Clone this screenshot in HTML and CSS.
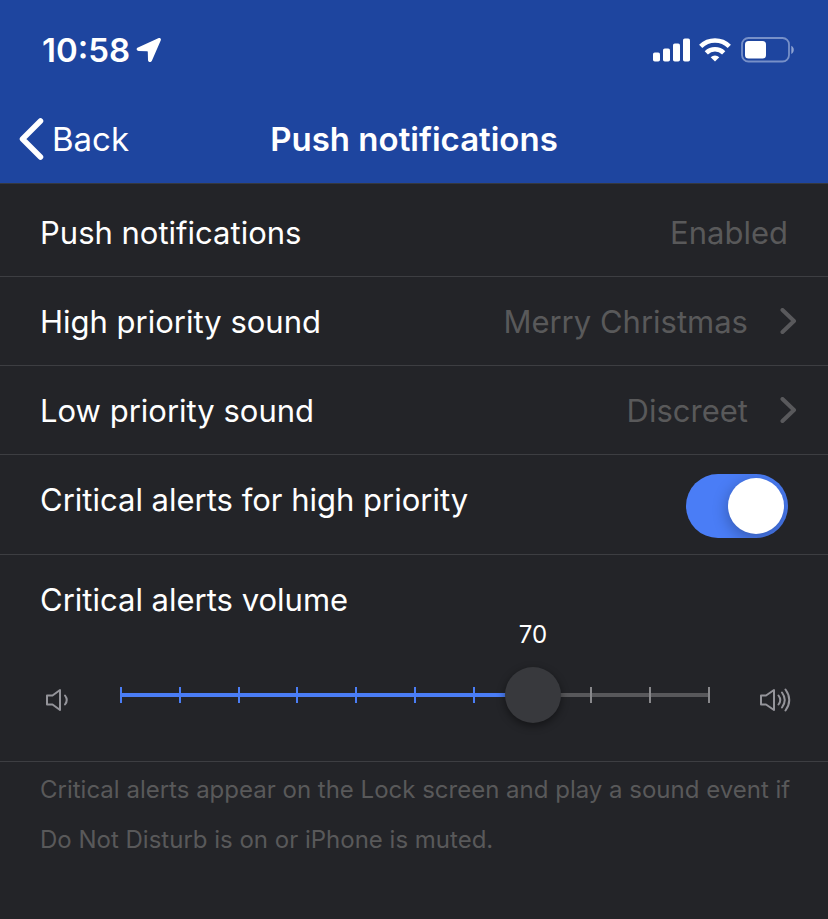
FILE: index.html
```html
<!DOCTYPE html>
<html lang="en">
<head>
<meta charset="utf-8">
<meta name="viewport" content="width=device-width, initial-scale=1">
<title>Push notifications</title>
<link rel="stylesheet" href="styles.css">
</head>
<body>
<header class="header">
  <div class="status">
    <div class="status-time">
      <span>10:58</span>
      <svg class="location" width="26" height="26" viewBox="0 0 26 26" aria-hidden="true"><path d="M2 10.600 22.200 1.200c1.900-.9 3.300.5 2.500 2.400l-8.800 20.200c-.9 2-3.800 1.700-3.900-.8l-.2-8c0-.6-.2-.8-.8-.8l-8.300-.2c-2.400-.1-2.800-2.400-.7-3.400z" fill="#fff"/></svg>
    </div>
    <div class="status-icons">
      <svg width="38" height="24" viewBox="0 0 38 24" aria-hidden="true"><g fill="#fff"><rect x="0" y="14.500" width="7" height="9" rx="1.800"/><rect x="10" y="10.500" width="7" height="13" rx="1.800"/><rect x="20" y="5.500" width="7" height="18" rx="1.800"/><rect x="30" y="0.500" width="7" height="23" rx="1.800"/></g></svg>
      <svg width="32" height="24" viewBox="0 0 32 24" aria-hidden="true"><path d="M16 23.500 11.700 19.200a6.200 6.200 0 0 1 8.600 0z" fill="#fff"/><g fill="none" stroke="#fff" stroke-width="4.600"><path d="M7.300 14.800a12.500 12.500 0 0 1 17.400 0"/><path d="M1.700 8.300a20.500 20.500 0 0 1 28.600 0"/></g></svg>
      <svg class="battery" width="54" height="26" viewBox="0 0 54 26" aria-hidden="true"><rect x="1" y="1" width="47" height="23.500" rx="6.500" fill="none" stroke="#7790c8" stroke-width="1.800"/><rect x="4" y="4" width="21" height="17.500" rx="3.500" fill="#fff"/><path d="M50.300 8.700c3.300 1.500 3.300 6.700 0 8.200z" fill="#8ea3d2"/></svg>
    </div>
  </div>
  <nav class="nav">
    <a class="back" href="#"><svg width="25" height="42" viewBox="0 0 25 42" aria-hidden="true"><path d="M21.500 3 3.500 21l18 18" fill="none" stroke="#fff" stroke-width="5.500" stroke-linecap="round" stroke-linejoin="round"/></svg><span>Back</span></a>
    <h1 class="title">Push notifications</h1>
  </nav>
</header>
<main>
  <div class="list">
    <div class="row"><span>Push notifications</span><span class="value">Enabled</span></div>
    <a class="row" href="#"><span>High priority sound</span><span class="value">Merry Christmas</span><svg class="chevron" width="18" height="28" viewBox="0 0 18 28" aria-hidden="true"><path d="M2.500 2 14 13 2.500 24"/></svg></a>
    <a class="row" href="#"><span>Low priority sound</span><span class="value">Discreet</span><svg class="chevron" width="18" height="28" viewBox="0 0 18 28" aria-hidden="true"><path d="M2.500 2 14 13 2.500 24"/></svg></a>
    <div class="row row-toggle"><label for="critical">Critical alerts for high priority</label><input class="toggle" id="critical" type="checkbox" role="switch" checked></div>
    <div class="volume">
      <label for="volume">Critical alerts volume</label>
      <div class="volume-control">
        <svg class="speaker" width="32" height="26" viewBox="0 0 32 26" aria-hidden="true"><path d="M3 8.500h5.500L16 3v20l-7.500-5.500H3z"/><path d="M21 8.500q3.500 4.500 0 9"/></svg>
        <div class="slider">
          <div class="track"></div>
          <div class="ticks"><i></i><i></i><i></i><i></i><i></i><i></i><i></i><i></i><i></i><i></i><i></i></div>
          <input class="range" id="volume" type="range" min="0" max="100" step="10" value="70">
          <output class="bubble" for="volume">70</output>
        </div>
        <svg class="speaker" width="32" height="26" viewBox="0 0 32 26" aria-hidden="true"><path d="M1 8.500h5L14 3v20l-8-5.500H1z"/><path d="M18.500 8.500q3.500 4.500 0 9M22 5.500q5.500 7.500 0 15M25.500 2.500q7.500 10.500 0 21"/></svg>
      </div>
    </div>
  </div>
  <p class="note">Critical alerts appear on the Lock screen and play a sound event if Do Not Disturb is on or iPhone is muted.</p>
</main>
</body>
</html>
```
FILE: styles.css
```css
* {
  box-sizing: border-box;
}

body {
  margin: 0;
  min-height: 100vh;
  background: #232428;
  color: #fff;
  font-family: Inter, "Liberation Sans", sans-serif;
  font-size: 31px;
  line-height: 40px;
}

a {
  color: inherit;
  text-decoration: none;
}

svg {
  display: block;
  flex: none;
}

.header {
  background: #1e459f;
  border-bottom: 1px solid #35383f;
}

.status {
  display: flex;
  align-items: center;
  justify-content: space-between;
  height: 96px;
  padding: 4px 33px 0 42px;
}

.status-time,
.status-icons {
  display: flex;
  align-items: center;
  gap: 8px;
}

.status-time {
  gap: 6px;
  font-size: 33px;
  font-weight: 600;
}

.battery {
  margin-left: 2px;
}

.nav {
  display: grid;
  grid-template-columns: 1fr auto 1fr;
  align-items: center;
  height: 87px;
  padding: 0 19px 2px;
}

.back {
  display: flex;
  align-items: center;
  gap: 8px;
  font-size: 33px;
}

.title {
  margin: 0;
  font-size: 33px;
  font-weight: 600;
}

.list {
  padding-top: 4px;
}

.row {
  display: flex;
  align-items: center;
  min-height: 89px;
  padding: 2px 40px 0;
  border-bottom: 1px solid #3d3e42;
}

.value {
  margin-left: auto;
  color: #59595a;
}

.chevron {
  margin: 0 -10px 0 32px;
}

.chevron path {
  fill: none;
  stroke: #59595c;
  stroke-width: 4;
  stroke-linecap: round;
  stroke-linejoin: round;
}

.row-toggle {
  align-items: flex-start;
  justify-content: space-between;
  min-height: 100px;
  padding-top: 25px;
}

.toggle {
  appearance: none;
  flex: none;
  width: 102px;
  height: 64px;
  margin: -6px 0 0;
  padding: 4px;
  border-radius: 32px;
  background: #4a7df6;
  overflow: hidden;
}

.toggle::before {
  content: "";
  display: block;
  width: 56px;
  height: 56px;
  border-radius: 50%;
  background: #fff;
  box-shadow: 0 4px 16px rgb(0 0 0 / 30%);
}

.toggle:checked::before {
  margin-left: auto;
}

.volume {
  padding: 25px 36px 34px 44px;
  border-bottom: 1px solid #3d3e42;
}

.volume > label {
  display: block;
  margin-left: -4px;
}

.volume-control {
  display: flex;
  align-items: center;
  justify-content: space-between;
  padding-top: 43px;
}

.speaker {
  margin-top: 10px;
}

.speaker path {
  fill: none;
  stroke: #94949a;
  stroke-width: 2;
  stroke-linecap: round;
  stroke-linejoin: round;
}

.slider {
  position: relative;
  flex: 1;
  height: 64px;
  margin: 0 50px 0 44px;
  display: grid;
  align-items: center;
}

.track,
.ticks,
.range {
  grid-area: 1 / 1;
}

.track {
  height: 4px;
  background: linear-gradient(to right, #4a7df6 70%, #58585b 70%);
}

.ticks {
  display: flex;
  justify-content: space-between;
}

.ticks i {
  width: 2px;
  height: 16px;
  background: #4a7df6;
}

.ticks i:nth-child(n + 8) {
  background: #88888b;
}

.range {
  appearance: none;
  width: auto;
  height: 56px;
  margin: 0 -28px;
  background: transparent;
  z-index: 1;
}

.range::-webkit-slider-thumb {
  appearance: none;
  width: 56px;
  height: 56px;
  border-radius: 50%;
  background: #38393d;
  box-shadow: 0 3px 8px rgb(0 0 0 / 45%);
}

.bubble {
  position: absolute;
  left: 70%;
  bottom: 100%;
  transform: translateX(-50%);
  margin-bottom: 14px;
  font-size: 24px;
  line-height: 28px;
}

.note {
  margin: 0;
  padding: 3px 32px 3px 40px;
  color: #59595a;
  font-size: 24px;
  line-height: 50px;
}
```
